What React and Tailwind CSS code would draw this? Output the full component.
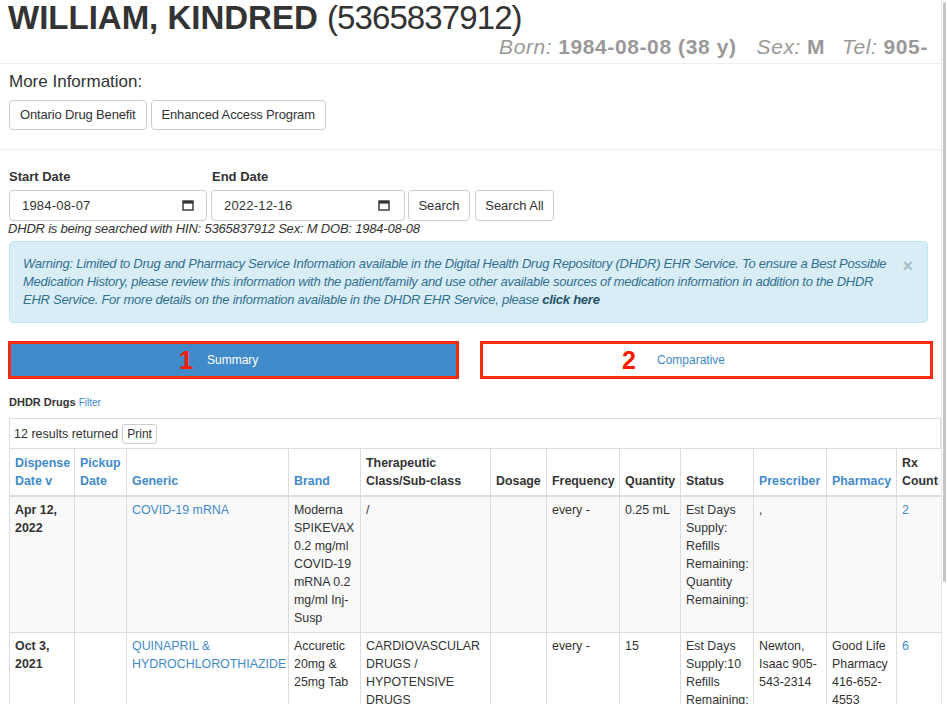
import React from "react";

const BLUE = "text-[#428bca]";

function Cal() {
  return (
    <svg width="12" height="11" viewBox="0 0 12 11" className="shrink-0">
      <rect x="1" y="1" width="10" height="9" fill="none" stroke="#333" strokeWidth="1.4" />
      <rect x="1" y="1" width="10" height="2.6" fill="#333" />
    </svg>
  );
}

function Btn({ children, className = "" }) {
  return (
    <div className={"h-[30px] flex items-center px-[10px] border border-[#ccc] rounded-[4px] bg-white text-[13px] tracking-[-0.15px] text-[#333] " + className}>
      {children}
    </div>
  );
}

const cols = [65, 52, 162, 72, 130, 56, 73, 61, 73, 73, 70, 45];

function Th({ children, blue }) {
  return (
    <th className={"border-l border-r border-t border-[#ddd] border-b-2 align-bottom text-left font-bold px-[5px] pt-[5px] pb-[5px] leading-[18px] " + (blue ? "text-[#428bca]" : "text-[#333]")}>
      {children}
    </th>
  );
}

function Td({ children, className = "" }) {
  return (
    <td className={"border border-[#ddd] align-top px-[5px] pt-[4px] pb-[5px] leading-[18px] " + className}>
      {children}
    </td>
  );
}

export default function App() {
  return (
    <div
      className="flex w-[947px] h-[704px] overflow-hidden bg-white text-[#333]"
      style={{ fontFamily: '"Liberation Sans", Arial, sans-serif' }}
    >
      <div className="w-[941px] shrink-0 flex flex-col">
        {/* header */}
        <div className="pl-[8px] text-[33px] leading-[36px] text-[#333] whitespace-nowrap">
          <span className="font-bold">WILLIAM, KINDRED</span>{" "}
          <span className="font-normal tracking-[-0.9px]">(5365837912)</span>
        </div>
        <div className="flex justify-end pr-[13px] text-[21px] leading-[22px] tracking-[0.6px] text-[#999] whitespace-nowrap pb-[5px]">
          <span className="italic">Born:</span>
          <span className="font-bold ml-[6px]">1984-08-08 (38 y)</span>
          <span className="italic ml-[20px]">Sex:</span>
          <span className="font-bold ml-[6px]">M</span>
          <span className="italic ml-[17px]">Tel:</span>
          <span className="font-bold ml-[6px]">905-</span>
        </div>

        <div className="border-t border-[#eee] pt-[8px] pb-[19px] px-[9px]">
          <div className="text-[17px] leading-[20px] mb-[8px]">More Information:</div>
          <div className="flex gap-[4px]">
            <Btn>Ontario Drug Benefit</Btn>
            <Btn>Enhanced Access Program</Btn>
          </div>
        </div>

        <div className="border-t border-[#eee] pt-[18px] pl-[8px]">
          <div className="flex gap-[4px] items-end">
            <div className="flex flex-col w-[199px]">
              <div className="text-[13px] font-bold leading-[18px] mb-[4px] pl-[1px]">Start Date</div>
              <div className="h-[31px] border border-[#ccc] rounded-[4px] flex items-center justify-between pl-[12px] pr-[12px] text-[13px] ml-[1px]">
                <span className="tracking-[0.2px]">1984-08-07</span>
                <Cal />
              </div>
            </div>
            <div className="flex flex-col w-[194px]">
              <div className="text-[13px] font-bold leading-[18px] mb-[4px] pl-[1px]">End Date</div>
              <div className="h-[31px] border border-[#ccc] rounded-[4px] flex items-center justify-between pl-[12px] pr-[14px] text-[13px]">
                <span className="tracking-[0.2px]">2022-12-16</span>
                <Cal />
              </div>
            </div>
            <div className="h-[31px] w-[62px] border border-[#ccc] rounded-[4px] flex items-center justify-center text-[13px] ml-[-1px]">Search</div>
            <div className="h-[31px] w-[79px] border border-[#ccc] rounded-[4px] flex items-center justify-center text-[13px] ml-[1px]">Search All</div>
          </div>
          <div className="italic text-[13px] leading-[16px] tracking-[-0.2px]">DHDR is being searched with HIN: 5365837912 Sex: M DOB: 1984-08-08</div>
        </div>

        <div className="mt-[4px] ml-[9px] w-[919px] border border-[#bce8f1] bg-[#d9edf7] rounded-[4px] flex pl-[13px] pr-[14px] py-[13px] text-[#31708f]">
          <div className="italic text-[13px] leading-[18px] tracking-[-0.25px] flex-1 pr-[14px]">
            Warning: Limited to Drug and Pharmacy Service Information available in the Digital Health Drug Repository (DHDR) EHR Service. To ensure a Best Possible Medication History, please review this information with the patient/family and use other available sources of medication information in addition to the DHDR EHR Service. For more details on the information available in the DHDR EHR Service, please <b className="text-[#245269]">click here</b>
          </div>
          <div className="text-[18px] leading-[18px] font-bold text-[#a8bcc6] mt-[2px]">×</div>
        </div>

        <div className="flex mt-[18px] ml-[8px] gap-[21px]">
          <div className="w-[451px] h-[38px] border-[3px] border-[#ff2a0c] bg-[#428bca] flex items-center pl-[168px]">
            <span className="text-[#ff1a00] font-bold text-[25px] leading-[28px] w-[13px]">1</span>
            <span className="text-white text-[12px] ml-[15px]">Summary</span>
          </div>
          <div className="w-[453px] h-[38px] border-[3px] border-[#ff2a0c] bg-white flex items-center pl-[139px]">
            <span className="text-[#ff1a00] font-bold text-[25px] leading-[28px] w-[14px]">2</span>
            <span className="text-[#428bca] text-[12px] ml-[21px]">Comparative</span>
          </div>
        </div>

        <div className="mt-[16px] ml-[9px] text-[11px] leading-[14px]">
          <span className="font-bold">DHDR Drugs</span>{" "}
          <span className="text-[#428bca] text-[10px]">Filter</span>
        </div>

        <div className="mt-[8px] ml-[9px] w-[932px]">
          <div className="flex items-center pl-[4px] pt-[5px] pb-[4px] text-[12.5px] border border-[#ddd] border-b-0">
            <span>12 results returned</span>
            <div className="ml-[4px] h-[20px] px-[4px] border border-[#ccc] rounded-[3px] text-[12px] flex items-center">Print</div>
          </div>
          <table className="table-fixed border-collapse w-[932px] text-[12.4px]">
            <colgroup>
              {cols.map((w, i) => (
                <col key={i} style={{ width: w }} />
              ))}
            </colgroup>
            <thead>
              <tr>
                <Th blue>Dispense Date v</Th>
                <Th blue>Pickup Date</Th>
                <Th blue>Generic</Th>
                <Th blue>Brand</Th>
                <Th>Therapeutic Class/Sub-class</Th>
                <Th>Dosage</Th>
                <Th>Frequency</Th>
                <Th>Quantity</Th>
                <Th>Status</Th>
                <Th blue>Prescriber</Th>
                <Th blue>Pharmacy</Th>
                <Th>Rx Count</Th>
              </tr>
            </thead>
            <tbody>
              <tr className="bg-[#f9f9f9]">
                <Td className="font-bold">Apr 12, 2022</Td>
                <Td></Td>
                <Td className={BLUE}>COVID-19 mRNA</Td>
                <Td>Moderna SPIKEVAX 0.2 mg/ml COVID-19 mRNA 0.2 mg/ml Inj-Susp</Td>
                <Td>/</Td>
                <Td></Td>
                <Td>every -</Td>
                <Td>0.25 mL</Td>
                <Td>Est Days Supply: Refills Remaining: Quantity Remaining:</Td>
                <Td>,</Td>
                <Td></Td>
                <Td className={BLUE}>2</Td>
              </tr>
              <tr>
                <Td className="font-bold">Oct 3, 2021</Td>
                <Td></Td>
                <Td className={BLUE}>QUINAPRIL &amp; HYDROCHLOROTHIAZIDE</Td>
                <Td>Accuretic 20mg &amp; 25mg Tab</Td>
                <Td>CARDIOVASCULAR DRUGS / HYPOTENSIVE DRUGS</Td>
                <Td></Td>
                <Td>every -</Td>
                <Td>15</Td>
                <Td>Est Days Supply:10 Refills Remaining: Quantity Remaining:</Td>
                <Td>Newton, Isaac 905-543-2314</Td>
                <Td>Good Life Pharmacy 416-652-4553</Td>
                <Td className={BLUE}>6</Td>
              </tr>
            </tbody>
          </table>
        </div>
      </div>
      <div className="w-[6px] shrink-0 border-l border-[#e6e6e6] pl-[1px] pt-[2px]">
        <div className="w-[3px] h-[580px] rounded-full bg-[#c4c4c4]"></div>
      </div>
    </div>
  );
}
